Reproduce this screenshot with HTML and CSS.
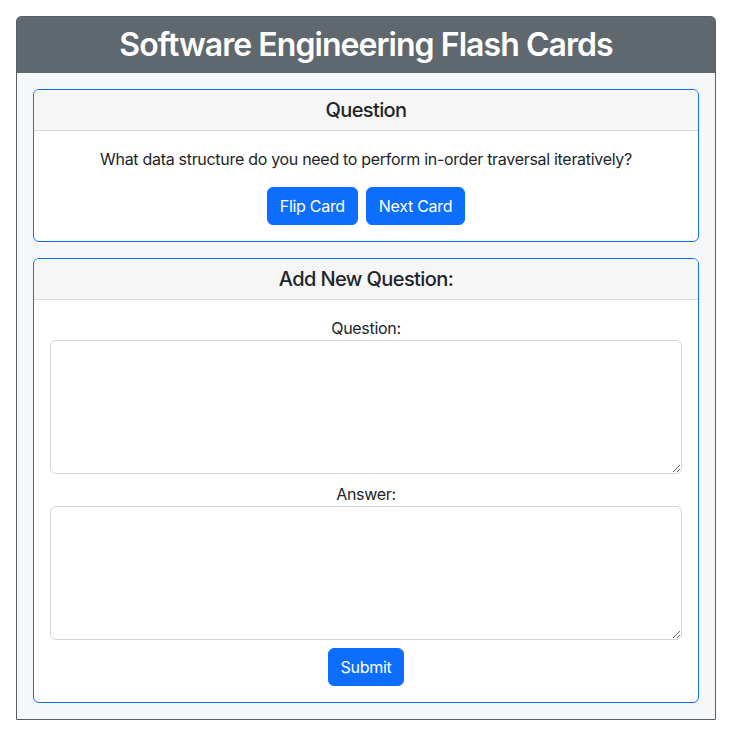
FILE: index.html
```html
<!DOCTYPE html>
<html lang="en">
<head>
<meta charset="utf-8">
<title>Software Engineering Flash Cards</title>
<link rel="stylesheet" href="styles.css">
</head>
<body>
<div class="app">
  <header class="app-header">
    <h1>Software Engineering Flash Cards</h1>
  </header>
  <main class="app-body">
    <section class="card">
      <div class="card-header">Question</div>
      <div class="card-body">
        <p class="question-text">What data structure do you need to perform in-order traversal iteratively?</p>
        <div class="actions">
          <button class="btn">Flip Card</button>
          <button class="btn">Next Card</button>
        </div>
      </div>
    </section>
    <section class="card">
      <div class="card-header">Add New Question:</div>
      <form class="card-body form">
        <label class="label" for="q">Question:</label>
        <textarea id="q" class="field" rows="5"></textarea>
        <label class="label" for="a">Answer:</label>
        <textarea id="a" class="field" rows="5"></textarea>
        <div class="actions">
          <button type="button" class="btn">Submit</button>
        </div>
      </form>
    </section>
  </main>
</div>
</body>
</html>
```

FILE: styles.css
```css
* { box-sizing: border-box; }
html, body { margin: 0; padding: 0; background: #ffffff; }
body {
  padding: 16px;
  font-family: Inter, "Liberation Sans", Arial, sans-serif;
  font-size: 16px;
  line-height: 24px;
  letter-spacing: -0.3px;
  color: #212529;
}
.app {
  width: 700px;
  border: 1px solid #5a5f64;
  border-radius: 5px 5px 0 0;
  background: #f6f7f9;
  overflow: hidden;
}
.app-header {
  background: #60686f;
  height: 56px;
  display: flex;
  align-items: center;
  justify-content: center;
}
.app-header h1 {
  margin: 0;
  color: #ffffff;
  font-size: 32px;
  line-height: 40px;
  font-weight: 600;
  letter-spacing: -0.95px;
}
.app-body {
  padding: 16px;
  display: flex;
  flex-direction: column;
  gap: 16px;
}
.card {
  border: 1px solid #0d6efd;
  border-radius: 6px;
  background: #ffffff;
  overflow: hidden;
}
.card-header {
  background: #f6f6f6;
  border-bottom: 1px solid #d9d9d9;
  padding: 8px 16px;
  text-align: center;
  font-size: 20px;
  line-height: 24px;
  font-weight: 500;
  letter-spacing: -0.6px;
}
.card-body {
  padding: 16px;
  text-align: center;
}
.question-text {
  margin: 0 0 16px;
}
.actions {
  display: flex;
  justify-content: center;
  gap: 8px;
}
.btn {
  font-family: inherit;
  font-size: 16px;
  line-height: 24px;
  letter-spacing: -0.3px;
  padding: 6px 12px;
  border: 1px solid #0d6efd;
  background: #0d6efd;
  color: #ffffff;
  border-radius: 6px;
}
.form {
  display: flex;
  flex-direction: column;
}
.label {
  display: block;
}
.field {
  display: block;
  width: 100%;
  height: 134px;
  margin: 0 0 8px;
  padding: 6px 12px;
  border: 1px solid #ced4da;
  border-radius: 6px;
  font-family: inherit;
  font-size: 16px;
  line-height: 24px;
  background: #ffffff;
}
```
